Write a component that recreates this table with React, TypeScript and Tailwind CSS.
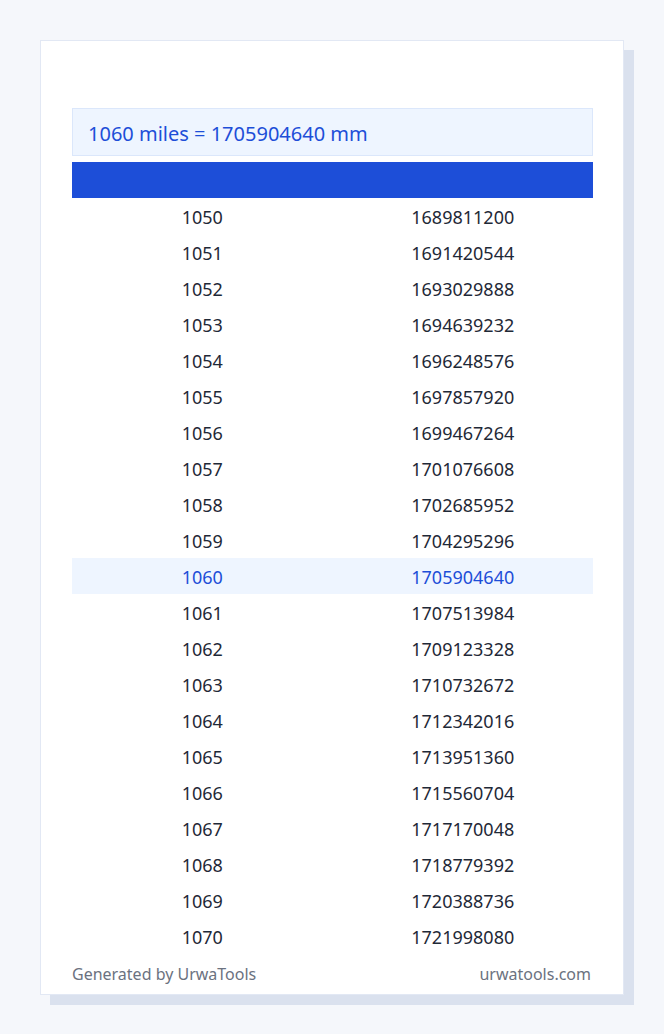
import React from 'react';

const FONT = { fontFamily: '"Noto Sans", "Open Sans", sans-serif' };

const rows = Array.from({ length: 21 }, (_, i) => {
  const miles = 1050 + i;
  return { miles, mm: miles * 1609344 };
});

export default function App() {
  return (
    <div className="min-h-[1034px] w-[664px] bg-[#f5f7fb] pt-[40px] pl-[40px]" style={FONT}>
      <div className="w-[584px] border border-[#e2e8f4] bg-white pt-[67px] pb-[9px] pl-[31px] pr-[30px] shadow-[10px_10px_0_#dae1ee]">
        <div className="h-[48px] flex items-center border border-[#dbe7fb] bg-[#eef5ff] px-[15px] pt-[3px] text-[20px] text-[#1d4ed8]">
          1060 miles = 1705904640 mm
        </div>
        <div className="mt-[6px] h-[36px] bg-[#1d4ed8]" />
        <div>
          {rows.map((r) => (
            <div
              key={r.miles}
              className={
                r.miles === 1060
                  ? 'grid grid-cols-2 h-[36px] items-center pt-[2px] bg-[#eef5ff] text-[#1d4ed8] text-[18px]'
                  : 'grid grid-cols-2 h-[36px] items-center pt-[2px] text-[#1f2937] text-[18px]'
              }
            >
              <div className="text-center">{r.miles}</div>
              <div className="text-center">{r.mm}</div>
            </div>
          ))}
        </div>
        <div className="mt-[9px] flex justify-between text-[16px] leading-[22px] text-[#6b7280]">
          <span>Generated by UrwaTools</span>
          <span className="pr-[2px]">urwatools.com</span>
        </div>
      </div>
    </div>
  );
}
